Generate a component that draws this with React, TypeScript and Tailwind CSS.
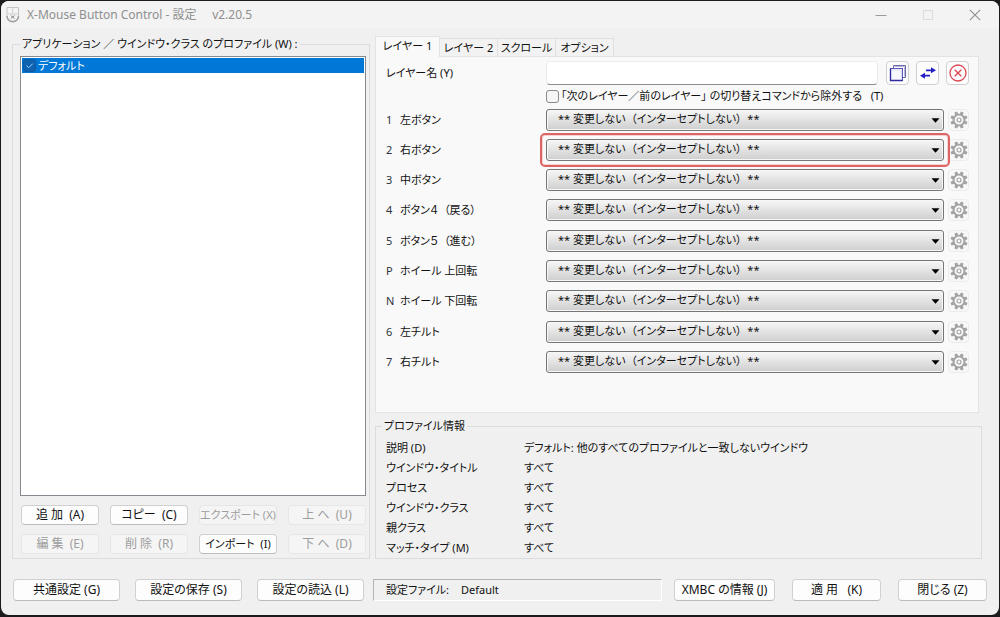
import React, { useState } from 'react';

interface ButtonRow {
	key: string;
	name: string;
}

interface InfoRow {
	label: string;
	value: string;
}

const NO_CHANGE = '** 変更しない\u00a0 （インターセプトしない）\u00a0 **';

const TABS = ['レイヤー 1', 'レイヤー 2', 'スクロール', 'オプション'];

const GROUPS: ButtonRow[][] = [
	[
		{ key: '1', name: '左ボタン' },
		{ key: '2', name: '右ボタン' },
		{ key: '3', name: '中ボタン' },
		{ key: '4', name: 'ボタン４  （戻る）' },
	],
	[
		{ key: '5', name: 'ボタン５  （進む）' },
		{ key: 'P', name: 'ホイール 上回転' },
		{ key: 'N', name: 'ホイール 下回転' },
	],
	[
		{ key: '6', name: '左チルト' },
		{ key: '7', name: '右チルト' },
	],
];

const INFO: InfoRow[] = [
	{
		label: '説明 (D)',
		value: 'デフォルト: 他のすべてのプロファイルと一致しないウインドウ',
	},
	{ label: 'ウインドウ・タイトル', value: 'すべて' },
	{ label: 'プロセス', value: 'すべて' },
	{ label: 'ウインドウ・クラス', value: 'すべて' },
	{ label: '親クラス', value: 'すべて' },
	{ label: 'マッチ・タイプ (M)', value: 'すべて' },
];

const PushButton: React.FC<{
	className?: string;
	disabled?: boolean;
	children: React.ReactNode;
}> = ({ className = '', disabled, children }) => (
	<button
		type="button"
		disabled={disabled}
		className={`flex items-center justify-center whitespace-pre rounded border border-[#d0d0d0] border-b-[#bcbcbc] bg-[#fdfdfd] disabled:border-[#e6e6e6] disabled:bg-[#f5f5f5] disabled:text-[#9d9d9d] ${className}`}
	>
		{children}
	</button>
);

const IconButton: React.FC<{ label: string; children: React.ReactNode }> = ({
	label,
	children,
}) => (
	<button
		type="button"
		aria-label={label}
		className="flex h-6 w-[23px] shrink-0 items-center justify-center rounded border border-[#d0d0d0] bg-[#fdfdfd]"
	>
		{children}
	</button>
);

const GearIcon: React.FC = () => (
	<svg width="18" height="18" viewBox="0 0 18 18" fill="none">
		<circle cx="9" cy="9" r="5.4" stroke="#a3a3a3" strokeWidth="1.9" />
		<circle cx="9" cy="9" r="2" stroke="#a3a3a3" strokeWidth="1.2" />
		{[22.5, 67.5, 112.5, 157.5, 202.5, 247.5, 292.5, 337.5].map((angle) => (
			<path
				key={angle}
				d="M7.2 3.4 L7.6 0.4 H10.4 L10.8 3.4 Z"
				fill="#a3a3a3"
				transform={`rotate(${angle} 9 9)`}
			/>
		))}
	</svg>
);

const ActionRow: React.FC<{ row: ButtonRow; highlighted?: boolean }> = ({
	row,
	highlighted,
}) => (
	<div className="flex h-[22px] items-center">
		<label
			htmlFor={`action-${row.key}`}
			className="flex w-[160px] shrink-0 whitespace-pre"
		>
			<span className="w-3.5 text-[#2b3440]">{row.key}</span>
			{row.name}
		</label>
		<div className="relative min-w-0 flex-1">
			<select
				id={`action-${row.key}`}
				className="block h-[22px] w-full appearance-none rounded-[3px] border border-[#757575] bg-linear-to-b from-[#f3f3f3] from-10% to-[#cecece] pb-0.5 pl-[11px] leading-4 shadow-[inset_0_0_0_1px_#f7f7f7]"
			>
				<option>{NO_CHANGE}</option>
			</select>
			<svg
				className="pointer-events-none absolute right-1 top-[9px]"
				width="9"
				height="5"
				viewBox="0 0 9 5"
			>
				<path d="M0.5 0.3 H8.5 L4.5 4.8 Z" fill="#000" />
			</svg>
			{highlighted && (
				<div className="pointer-events-none absolute -inset-1.5 z-10 rounded-[5px] border-2 border-[#dc6464] shadow-[inset_0_0_0_1px_#f6d3d3]" />
			)}
		</div>
		<button
			type="button"
			disabled
			aria-label={`${row.name} 設定`}
			className="ml-1 flex h-[22px] w-[21px] shrink-0 items-center justify-center rounded border border-[#ececec] bg-[#f8f8f8]"
		>
			<GearIcon />
		</button>
	</div>
);

const TitleBar: React.FC = () => (
	<header className="flex h-[27px] items-center bg-[#f3f3f3] pl-1 pr-[18px]">
		<svg width="16" height="18" viewBox="0 0 16 18" fill="none">
			<path d="M2 1.5 H13.5 V10 C13.5 18 2 18 2 10 Z" fill="#f4f4f4" stroke="#c4c4c4" />
			<path d="M2 8 H13.5 M7.7 1.5 V8" stroke="#d0d0d0" />
			<path d="M2 10 C2.4 17.4 13.1 17.4 13.5 10" stroke="#a2a2a2" strokeWidth="1.6" />
			<path d="M5.8 9.5 L9.6 12.5 M9.6 9.5 L5.8 12.5" stroke="#8c8c8c" />
		</svg>
		<h1 className="ml-1.5 whitespace-pre text-[12px] text-[#8f8f8f]">
			X-Mouse Button Control - 設定{'     '}v2.20.5
		</h1>
		<div className="ml-auto flex items-center gap-[35px]">
			<button type="button" aria-label="最小化">
				<svg width="12" height="12" viewBox="0 0 12 12">
					<path d="M0.5 6.5 H11.5" stroke="#9a9a9a" />
				</svg>
			</button>
			<button type="button" aria-label="最大化" disabled>
				<svg width="12" height="12" viewBox="0 0 12 12" fill="none">
					<rect x="1.5" y="1.5" width="9" height="9" stroke="#dcdcdc" />
				</svg>
			</button>
			<button type="button" aria-label="閉じる">
				<svg width="12" height="12" viewBox="0 0 12 12">
					<path d="M0.8 0.8 L11.2 11.2 M11.2 0.8 L0.8 11.2" stroke="#8f8f8f" strokeWidth="1.1" />
				</svg>
			</button>
		</div>
	</header>
);

const ProfileList: React.FC = () => {
	const [enabled, setEnabled] = useState(true);

	return (
		<fieldset className="flex min-w-0 flex-col border border-[#dcdcdc] pb-1 pl-[7px] pr-[3px]">
			<legend className="whitespace-pre px-0.5 leading-4">
				アプリケーション ／ ウインドウ・クラス のプロファイル (W) :
			</legend>
			<div className="mt-1 flex-1 border border-[#868a90] bg-white p-px">
				<label className="flex h-[15px] items-center bg-[#0078d7] pl-px leading-[15px] text-white">
					<span className="relative flex">
						<input
							type="checkbox"
							checked={enabled}
							onChange={(e) => setEnabled(e.target.checked)}
							className="size-[13px] appearance-none rounded-[3px] border border-[#0a5aa5] bg-[#0f62b0]"
						/>
						{enabled && (
							<svg
								className="pointer-events-none absolute inset-0"
								width="13"
								height="13"
								viewBox="0 0 13 13"
								fill="none"
							>
								<path d="M3.5 6.5 L5.7 8.7 L9.7 4.7" stroke="#9fd0ff" />
							</svg>
						)}
					</span>
					<span className="ml-0.5">デフォルト</span>
				</label>
			</div>
			<div className="mt-[9px] grid grid-cols-4 gap-x-[11px] gap-y-[9px] pl-px text-[12px]">
				<PushButton className="h-5">追 加  (A)</PushButton>
				<PushButton className="h-5">コピー  (C)</PushButton>
				<PushButton className="h-5 text-[11px]" disabled>エクスポート (X)</PushButton>
				<PushButton className="h-5" disabled>上 へ  (U)</PushButton>
				<PushButton className="h-5" disabled>編 集  (E)</PushButton>
				<PushButton className="h-5" disabled>削 除  (R)</PushButton>
				<PushButton className="h-5 text-[11px]">インポート  (I)</PushButton>
				<PushButton className="h-5" disabled>下 へ  (D)</PushButton>
			</div>
		</fieldset>
	);
};

const LayerPanel: React.FC = () => {
	const [tab, setTab] = useState(0);
	const [layerName, setLayerName] = useState('');
	const [excluded, setExcluded] = useState(false);

	return (
		<div className="mr-[3px] flex flex-1 flex-col">
			<div role="tablist" className="flex h-5 items-end">
				{TABS.map((name, i) => (
					<button
						key={name}
						type="button"
						role="tab"
						aria-selected={tab === i}
						onClick={() => setTab(i)}
						className={
							tab === i
								? 'relative -mb-px h-[21px] w-[65px] shrink-0 border border-b-0 border-[#e3e3e3] bg-[#f9f9f9] pb-0.5'
								: 'h-[18px] w-[58px] shrink-0 border border-b-0 border-l-0 border-[#e0e0e0] bg-[#f2f2f2]'
						}
					>
						{name}
					</button>
				))}
			</div>
			<div className="flex-1 border border-[#e3e3e3] bg-[#f9f9f9] pb-[38px] pl-2.5 pr-[9px] pt-1">
				<div className="flex items-center">
					<label htmlFor="layer-name" className="w-[160px] shrink-0">
						レイヤー名 (Y)
					</label>
					<input
						id="layer-name"
						type="text"
						value={layerName}
						onChange={(e) => setLayerName(e.target.value)}
						className="mr-2 h-6 min-w-0 flex-1 rounded-sm border border-[#ececec] border-b-[#8c8c8c] bg-white px-1"
					/>
					<div className="flex gap-[7px]">
						<IconButton label="レイヤーをコピー">
							<svg width="18" height="18" viewBox="0 0 18 18" fill="none" className="shrink-0">
								<path d="M4.5 4 V1.5 H16.5 V13.5 H14" stroke="#6a68a8" />
								<path d="M5.5 2.5 H15.5 V12.5" stroke="#b9b8dc" />
								<rect x="1.5" y="4.5" width="12" height="12" fill="#f8f9ff" stroke="#5a58b8" />
								<path d="M1.5 4.5 V16.5 H13.5" stroke="#2f2ca0" strokeWidth="1.4" />
								<path d="M3 6 H12.5 V15" stroke="#dcdef8" />
							</svg>
						</IconButton>
						<IconButton label="レイヤーを入れ替え">
							<svg width="18" height="14" viewBox="0 0 18 14">
								<path d="M7 4.3 H13 M5 9.7 H11" stroke="#2420c4" strokeWidth="1.8" />
								<path d="M12 1.3 L17 4.3 L12 7.3 Z M6 6.7 L1 9.7 L6 12.7 Z" fill="#2420c4" />
							</svg>
						</IconButton>
						<IconButton label="レイヤーを消去">
							<svg width="18" height="18" viewBox="0 0 18 18" fill="none" className="shrink-0">
								<circle cx="9" cy="9" r="8" stroke="#dc4650" strokeWidth="1.3" />
								<path d="M5.7 5.7 L12.3 12.3 M12.3 5.7 L5.7 12.3" stroke="#dc4650" strokeWidth="1.3" />
							</svg>
						</IconButton>
					</div>
				</div>
				<label className="ml-[160px] mt-0.5 flex h-[18px] items-center whitespace-pre">
					<input
						type="checkbox"
						checked={excluded}
						onChange={(e) => setExcluded(e.target.checked)}
						className="mr-0.5 size-[13px] shrink-0 appearance-none rounded-[3px] border border-[#8a8a8a] bg-[#f5f5f5] checked:bg-[#0067c0]"
					/>
					「次のレイヤー／前のレイヤー」 の切り替えコマンドから除外する   (T)
				</label>
				<div className="mt-1 flex flex-col gap-[9px]">
					{GROUPS.map((group) => (
						<div key={group[0].key} className="flex flex-col gap-2">
							{group.map((row) => (
								<ActionRow key={row.key} row={row} highlighted={row.key === '2'} />
							))}
						</div>
					))}
				</div>
			</div>
		</div>
	);
};

const ProfileInfo: React.FC = () => (
	<fieldset className="mt-[5px] min-w-0 border border-[#dcdcdc] pl-2.5">
		<legend className="-ml-1 px-0.5 leading-4">プロファイル情報</legend>
		<dl className="mt-1 grid grid-cols-[138px_1fr] leading-5">
			{INFO.map((info) => (
				<React.Fragment key={info.label}>
					<dt>{info.label}</dt>
					<dd>{info.value}</dd>
				</React.Fragment>
			))}
		</dl>
	</fieldset>
);

const App: React.FC = () => {
	return (
		<div className="flex min-h-screen flex-col bg-[#1c1a1c] p-px pb-0.5 font-['Noto_Sans','Noto_Sans_CJK_JP',sans-serif] text-[11px] leading-4 text-[#111] [font-feature-settings:'palt']">
			<div className="flex flex-1 flex-col overflow-hidden rounded-lg bg-[#f0f0f0]">
				<TitleBar />
				<main className="grid flex-1 grid-cols-[358px_minmax(0,1fr)] gap-[5px] pl-[11px] pr-[17px] pt-2">
					<ProfileList />
					<div className="flex flex-col">
						<LayerPanel />
						<ProfileInfo />
					</div>
				</main>
				<footer className="flex items-center pb-3.5 pl-3 pr-3 pt-5 text-[12px]">
					<div className="flex gap-[15px]">
						<PushButton className="h-[22px] w-[107px]">共通設定 (G)</PushButton>
						<PushButton className="h-[22px] w-[107px]">設定の保存 (S)</PushButton>
						<PushButton className="h-[22px] w-[107px]">設定の読込 (L)</PushButton>
					</div>
					<div className="ml-[9px] flex h-[22px] flex-1 items-center gap-3 border border-[#b4b4b4] border-b-white border-r-white pl-3 text-[11px]">
						<span>設定ファイル:</span>
						<span>Default</span>
					</div>
					<div className="ml-3 flex gap-[17px]">
						<PushButton className="h-[22px] w-[101px]">XMBC の情報 (J)</PushButton>
						<PushButton className="h-[22px] w-[89px]">適 用   (K)</PushButton>
						<PushButton className="h-[22px] w-[89px]">閉じる (Z)</PushButton>
					</div>
				</footer>
			</div>
		</div>
	);
};

export default App;
